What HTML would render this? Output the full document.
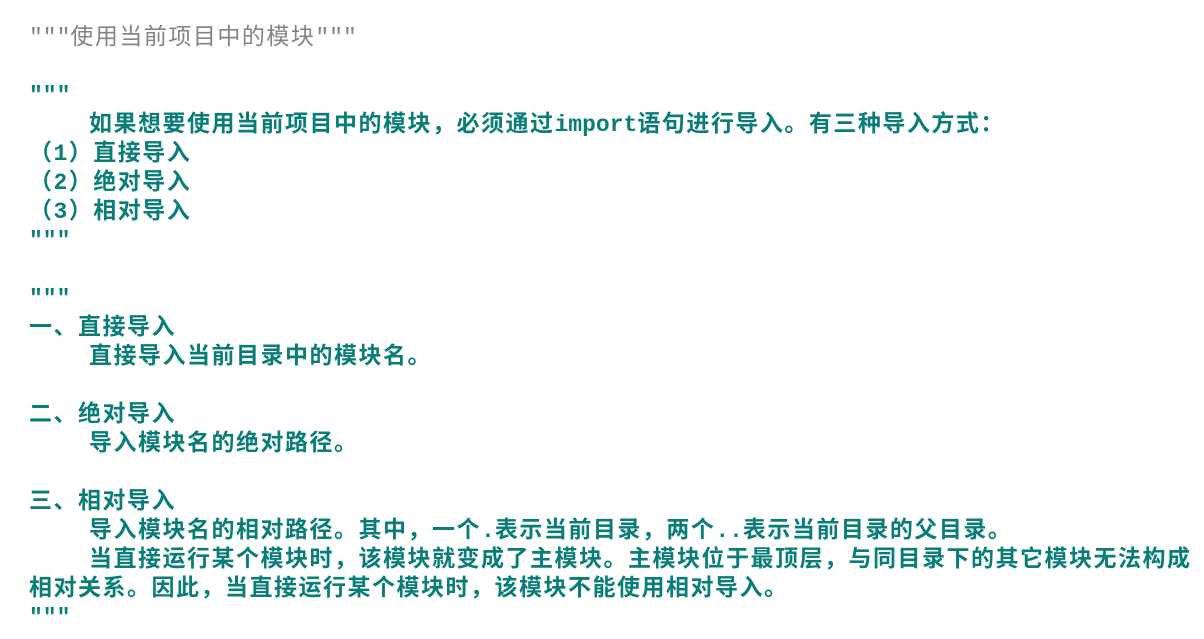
<!DOCTYPE html>
<html><head><meta charset="utf-8"><style>
body{margin:0;background:#fff;width:1204px;height:639px;overflow:hidden}
.w{position:absolute;left:29px;top:24px;font-family:"Liberation Mono","Noto Sans CJK SC",monospace;font-size:23px;line-height:29px;letter-spacing:1.5px;color:#0b7d78;font-weight:bold;white-space:pre}
.g{color:#848484;font-weight:normal}
.a{letter-spacing:0;font-size:23px}
.i{display:inline-block;width:60px}
</style></head><body><div class="w"><div class="g"><span class="a">"""</span>使用当前项目中的模块<span class="a">"""</span></div><div> </div><div><span class="a">"""</span></div><div><span class="i"></span>如果想要使用当前项目中的模块，必须通过<span class="a">import</span>语句进行导入。有三种导入方式：</div><div>（1）直接导入</div><div>（2）绝对导入</div><div>（3）相对导入</div><div><span class="a">"""</span></div><div> </div><div><span class="a">"""</span></div><div>一、直接导入</div><div><span class="i"></span>直接导入当前目录中的模块名。</div><div> </div><div>二、绝对导入</div><div><span class="i"></span>导入模块名的绝对路径。</div><div> </div><div>三、相对导入</div><div><span class="i"></span>导入模块名的相对路径。其中，一个<span class="a">.</span>表示当前目录，两个<span class="a">..</span>表示当前目录的父目录。</div><div><span class="i"></span>当直接运行某个模块时，该模块就变成了主模块。主模块位于最顶层，与同目录下的其它模块无法构成</div><div>相对关系。因此，当直接运行某个模块时，该模块不能使用相对导入。</div><div><span class="a">"""</span></div></div></body></html>
